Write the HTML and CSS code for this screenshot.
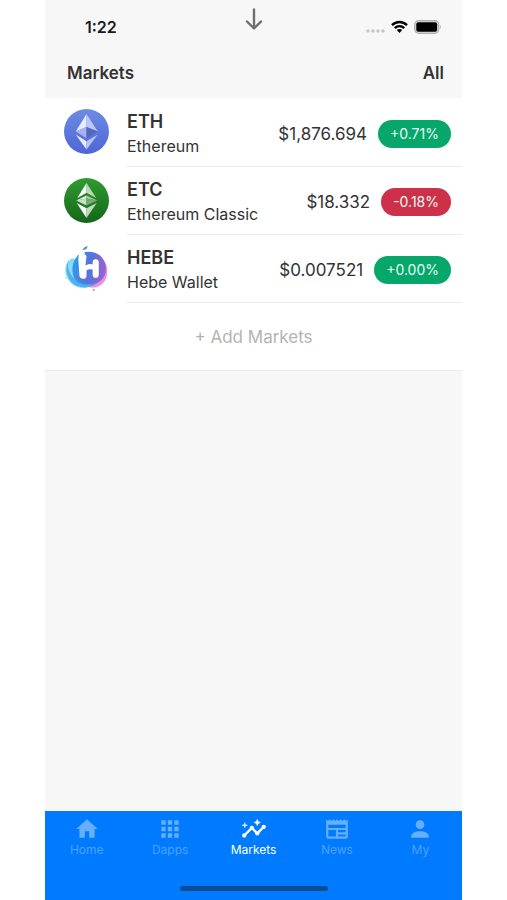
FILE: index.html
```html
<!DOCTYPE html>
<html lang="en">
<head>
<meta charset="utf-8">
<meta name="viewport" content="width=device-width, initial-scale=1">
<title>Markets</title>
<link rel="stylesheet" href="styles.css">
</head>
<body>
<div class="app">
  <div class="status">
    <span class="clock">1:22</span>
    <svg class="pull" width="18" height="22" viewBox="0 0 18 22" fill="none" stroke="#6e6e6e" stroke-width="2.4" stroke-linecap="round" stroke-linejoin="round"><path d="M9 1.5V20M2 13.5L9 20.5L16 13.5"/></svg>
    <div class="signals">
      <svg width="20" height="14" viewBox="0 0 20 14" fill="#c4c4c4"><circle cx="3" cy="11" r="1.7"/><circle cx="8" cy="11" r="1.7"/><circle cx="13" cy="11" r="1.7"/><circle cx="18" cy="11" r="1.7"/></svg>
      <svg width="17" height="14" viewBox="0 0 17 14" fill="none" stroke="#000" stroke-width="2.4"><path d="M1 5.1C5.2.9 11.8.9 16 5.1M3.8 8.1C6.4 5.5 10.6 5.5 13.2 8.1"/><path d="M8.5 13L5.8 10.1C7.3 8.7 9.7 8.7 11.2 10.1Z" fill="#000" stroke="none"/></svg>
      <svg width="28" height="14" viewBox="0 0 28 14"><rect x=".7" y=".7" width="24" height="12.6" rx="3.8" fill="#d8d8d8" stroke="#b0b0b0" stroke-width="1.2"/><rect x="2.3" y="2.3" width="20.8" height="9.4" rx="2"/><path d="M26 4.8Q27.6 7 26 9.2Z" fill="#a0a0a0"/></svg>
    </div>
  </div>
  <header class="header">
    <h1 class="title">Markets</h1>
    <button class="all" type="button">All</button>
  </header>
  <main class="content">
    <ul class="list">
      <li class="row">
        <svg class="coin" viewBox="0 0 44 44"><defs><linearGradient id="eth" x1="0" y1="0" x2="0" y2="1"><stop offset="0" stop-color="#6c8ce4"/><stop offset="1" stop-color="#5065d6"/></linearGradient></defs><circle cx="22" cy="22" r="22" fill="url(#eth)"/><path d="M22 5L11.5 22L22 17.5Z" fill="#e6ecff"/><path d="M22 5L33 22L22 17.5Z" fill="#b9c8f5"/><path d="M22 17.5L11.5 22L22 28.5Z" fill="#a2b3ee"/><path d="M22 17.5L33 22L22 28.5Z" fill="#5468bd"/><path d="M11.5 25L22 31.5V39.5Z" fill="#e8eeff"/><path d="M33 25L22 31.5V39.5Z" fill="#b5c5f6"/></svg>
        <div class="entry">
          <div class="names"><strong class="symbol">ETH</strong><span class="name">Ethereum</span></div>
          <span class="price">$1,876.694</span><span class="change up">+0.71%</span>
        </div>
      </li>
      <li class="row">
        <svg class="coin" viewBox="0 0 44 44"><defs><linearGradient id="etc" x1="0" y1="0" x2="0" y2="1"><stop offset="0" stop-color="#319b31"/><stop offset="1" stop-color="#146618"/></linearGradient></defs><circle cx="22" cy="22" r="22" fill="url(#etc)"/><path d="M22 5L13 19.5L22 14.5Z" fill="#fff"/><path d="M22 5L31.5 19.5L22 14.5Z" fill="#bad9ba"/><path d="M22 17L12 22L22 20Z" fill="#e5f3e5"/><path d="M22 17L32.5 22L22 20Z" fill="#a5cda5"/><path d="M12 22L22 20V27Z" fill="#c8e0c8"/><path d="M32.5 22L22 20V27Z" fill="#78a878"/><path d="M12.5 24.5L22 29.5V39Z" fill="#fff"/><path d="M32 24.5L22 29.5V39Z" fill="#bbdbbb"/></svg>
        <div class="entry">
          <div class="names"><strong class="symbol">ETC</strong><span class="name">Ethereum Classic</span></div>
          <span class="price">$18.332</span><span class="change down">-0.18%</span>
        </div>
      </li>
      <li class="row">
        <svg class="coin" viewBox="0 0 44 44"><defs><linearGradient id="hebe" x1="0" y1=".4" x2="1" y2=".6"><stop offset="0" stop-color="#2f9bf0"/><stop offset=".5" stop-color="#5673dc"/><stop offset="1" stop-color="#9a62d0"/></linearGradient></defs><path d="M8 12C2 15 0 22 2 28C5 38 14 43 25 40L16 14Z" fill="#86dcf7"/><path d="M34 9C42 14 44 24 41 32C38 39 31 42 24 40L34 25Z" fill="#ee90dc"/><path d="M15 8C21 4 32 5 37 11C43 19 42 29 36 34C29 39 17 40 11 33C6 26 8 13 15 8Z" fill="url(#hebe)"/><path d="M5 13C1 24 9 34 19 36C27 38 32 36 35 34C28 42 14 43 7 35C2 29 1 19 5 13Z" fill="#3795ec" opacity=".65"/><path d="M14 13Q14 5 20 4Q19 7 22 10L21 19Q25 17 28 18V16Q28 13 31 13Q34 13 34 16V28Q34 31 31 31Q28 31 28 28V23Q24 22 22 24V29Q22 32 19 32Q15 32 15 28Z" fill="#fff"/><path d="M18 4Q19 1 23 0Q23 4 18 4Z" fill="#4b93cc"/><circle cx="2" cy="31" r=".8" fill="#83daf5"/><circle cx="29" cy="43" r="1" fill="#ec73c6"/></svg>
        <div class="entry">
          <div class="names"><strong class="symbol">HEBE</strong><span class="name">Hebe Wallet</span></div>
          <span class="price">$0.007521</span><span class="change up">+0.00%</span>
        </div>
      </li>
    </ul>
    <button class="add" type="button">+ Add Markets</button>
  </main>
  <footer class="footer">
    <nav class="tabs">
      <a class="tab" href="#home"><svg class="glyph" viewBox="0 0 24 24"><path d="M10 20V14H14V20H19V12H22L12 3L2 12H5V20Z"/></svg><span>Home</span></a>
      <a class="tab" href="#dapps"><svg class="glyph" viewBox="0 0 24 24"><path d="M4 4h4v4H4zM10 4h4v4h-4zM16 4h4v4h-4zM4 10h4v4H4zM10 10h4v4h-4zM16 10h4v4h-4zM4 16h4v4H4zM10 16h4v4h-4zM16 16h4v4h-4z"/></svg><span>Dapps</span></a>
      <a class="tab active" href="#markets" aria-current="page"><svg class="glyph" viewBox="0 0 24 24"><path d="M3 18L10 11L15 16L21 10" fill="none" stroke="currentColor" stroke-width="2.2"/><circle cx="3" cy="18" r="2"/><circle cx="10" cy="11" r="2"/><circle cx="15" cy="16" r="2"/><circle cx="21" cy="10" r="2"/><path d="M15 9L15.940 6.930L18 6L15.940 5.070L15 3L14.080 5.070L12 6L14.080 6.930ZM3.500 11L4 9L6 8.500L4 8L3.500 6L3 8L1 8.500L3 9Z" stroke="currentColor" stroke-width=".4"/></svg><span>Markets</span></a>
      <a class="tab" href="#news"><svg class="glyph" viewBox="0 0 24 24"><path d="M20 11H4V8H20M20 15H13V13H20M20 19H13V17H20M11 19H4V13H11M20.330 4.670L18.670 3L17 4.670L15.330 3L13.670 4.670L12 3L10.330 4.670L8.670 3L7 4.670L5.330 3L3.670 4.670L2 3V19A2 2 0 0 0 4 21H20A2 2 0 0 0 22 19V3Z"/></svg><span>News</span></a>
      <a class="tab" href="#my"><svg class="glyph" viewBox="0 0 24 24"><circle cx="12" cy="8" r="4"/><path d="M12 14C16.420 14 20 15.790 20 18V20H4V18C4 15.790 7.580 14 12 14Z"/></svg><span>My</span></a>
    </nav>
    <div class="indicator"></div>
  </footer>
</div>
</body>
</html>
```
FILE: styles.css
```css
* { box-sizing: border-box; }

body {
  margin: 0;
  padding: 0 45px;
  background: #fff;
  color: #333;
  font-family: Inter, "Liberation Sans", sans-serif;
}

button {
  padding: 0;
  border: 0;
  background: none;
  color: inherit;
  font: inherit;
}

svg { display: block; flex: none; }

.app {
  display: flex;
  flex-direction: column;
  min-height: 100vh;
  background: #f7f7f7;
}

.status {
  display: grid;
  grid-template-columns: 1fr auto 1fr;
  align-items: center;
  height: 48px;
  padding: 6px 20px 0;
}

.clock {
  padding-left: 20px;
  color: #1a1a1a;
  font-size: 16px;
  font-weight: 600;
}

.pull {
  align-self: start;
  margin-top: 2px;
}

.signals {
  display: flex;
  justify-content: flex-end;
  gap: 6px;
}

.header {
  display: flex;
  align-items: center;
  justify-content: space-between;
  height: 50px;
  padding: 0 18px 0 22px;
}

.title, .all {
  margin: 0;
  font-size: 17px;
  font-weight: 600;
}

.content { flex: 1; }

.list {
  margin: 0;
  padding: 0;
  background: #fff;
  list-style: none;
}

.row {
  display: flex;
  align-items: center;
  gap: 18px;
  padding-left: 19px;
}

.coin {
  width: 45px;
  height: 45px;
  margin-bottom: 2px;
}

.entry {
  display: flex;
  flex: 1;
  align-items: center;
  gap: 11px;
  height: 68px;
  padding: 3px 11px 0 0;
  border-bottom: 1px solid #ebebeb;
}

.row:first-child .entry { height: 69px; }

.names {
  display: flex;
  flex: 1;
  flex-direction: column;
  line-height: 24px;
}

.symbol {
  font-size: 18px;
  font-weight: 600;
}

.name { font-size: 16px; }

.price { font-size: 17px; }

.change {
  padding: 0 12px;
  border-radius: 14px;
  color: #e8fff5;
  font-size: 14px;
  line-height: 28px;
}

.up { background: #07a66b; }
.down { background: #cd3049; }

.add {
  display: block;
  width: 100%;
  height: 68px;
  border-bottom: 1px solid #ebebeb;
  background: #fff;
  color: #b3b3b3;
  font-size: 17px;
}

.footer {
  padding: 5px 0 9px;
  background: #007aff;
}

.tabs { display: flex; }

.tab {
  display: flex;
  flex: 1;
  flex-direction: column;
  align-items: center;
  color: #66afff;
  font-size: 12px;
  line-height: 16px;
  text-decoration: none;
}

.tab span { color: #4da2ff; }

.tab.active, .tab.active span { color: #fff; }

.glyph {
  width: 26px;
  height: 26px;
  fill: currentColor;
}

.indicator {
  width: 148px;
  height: 5px;
  margin: 28px auto 0;
  border-radius: 3px;
  background: #0b4c94;
}
```
